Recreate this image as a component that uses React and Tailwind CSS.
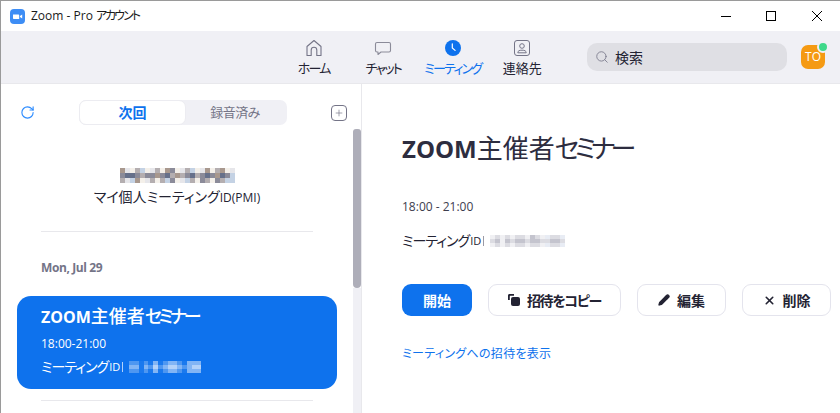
import { Pencil, X, Search, RotateCw, Plus } from 'lucide-react';

const font = "font-['Open_Sans','Noto_Sans_CJK_JP',sans-serif] [font-feature-settings:'palt']";

// pixelated meeting number blocks
const Mosaic = ({rows, cell = 'w-[5px] h-[5px]'}) => (
    <div className="flex flex-col">
        {rows.map((row, i) =>
            <div key={i} className="flex">
                {row.map((c, j) => <div key={j} className={cell + ' ' + c} />)}
            </div>
        )}
    </div>
)

const g1 = 'bg-[#e6e6ea]', g2 = 'bg-[#b4aeb0]', g3 = 'bg-[#8b8b99]', g4 = 'bg-[#66708a]', g5 = 'bg-[#f4f0ea]', g6 = 'bg-[#c4d2e4]', g7 = 'bg-[#a8988e]';
const pmiRows = [
    [g7, g1, g5, g2, g6, g5, g1, g2, g5, g7, g3, g5, g1, g2, g6, g5, g1, g7, g5, g2, g7, g5, g1],
    [g3, g4, g4, g3, g2, g3, g3, g7, g3, g4, g2, g7, g2, g3, g4, g2, g3, g4, g3, g7, g4, g3, g6],
    [g2, g1, g6, g7, g5, g1, g2, g5, g2, g6, g3, g5, g1, g6, g2, g5, g3, g2, g5, g3, g2, g6, g6],
];

const b1 = 'bg-[#1a79ee]', b2 = 'bg-[#4e97f1]', b3 = 'bg-[#82b5f5]', b4 = 'bg-[#b3d2f9]';
const cardRows = [
    [b2, b2, b1, b2, b1, b3, b1, b2, b3, b3, b2, b1, b3, b3, b3],
    [b3, b3, b1, b3, b2, b4, b2, b3, b4, b4, b3, b2, b3, b4, b4],
    [b2, b2, b1, b2, b1, b3, b1, b2, b3, b3, b2, b1, b3, b3, b3],
];

const l1 = 'bg-[#f0f0f3]', l2 = 'bg-[#dcdce2]', l3 = 'bg-[#c4c4ce]', l4 = 'bg-[#e8ecf4]';
const detailRows = [
    [l1, l2, l1, l2, l1, l2, l2, l1, l3, l2, l1, l4, l2, l2, l4],
    [l2, l3, l1, l3, l2, l3, l3, l2, l3, l3, l2, l2, l3, l3, l2],
    [l1, l2, l1, l2, l1, l2, l2, l1, l2, l2, l1, l4, l2, l2, l4],
];

const NavItem = ({icon, label, active, kana}) => (
    <div className="w-[69.5px] flex flex-col items-center">
        <div className="h-[22px] flex items-center justify-center">{icon}</div>
        <span className={`text-[13px] leading-[18px] whitespace-nowrap ${kana ? 'tracking-[-1.8px]' : ''} ${active ? 'text-[#0e72ed]' : 'text-[#232333]'}`}>{label}</span>
    </div>
)

const ActionButton = ({icon, label, width, tight}) => (
    <button className={`${width} h-8 flex items-center justify-center gap-[7px] bg-white border border-[#e4e4ed] rounded-[9px] text-[14px] font-bold text-[#232333]`}>
        {icon}
        <span className={tight ? 'tracking-[-1.300px]' : ''}>{label}</span>
    </button>
)

export default function App() {
    return (
        <div className={`w-[840px] h-[413px] overflow-hidden flex flex-col bg-white border-t border-l border-[#9a9a9a] text-[#232333] ${font}`}>
            {/* title bar */}
            <div className="h-[30px] shrink-0 flex items-center bg-white">
                <svg className="ml-[9px]" width="15" height="15" viewBox="0 0 15 15">
                    <rect width="15" height="15" rx="4" fill="#3d8df5" />
                    <path d="M3 5.500h5.200c.6 0 1 .4 1 1V10H4c-.6 0-1-.4-1-1z M10 7l2.200-1.600v4.200L10 8z" fill="#fff" />
                </svg>
                <span className="ml-[6px] text-[12px] text-[#1a1a1a]">Zoom - Pro <span className="tracking-[-2px]">アカウント</span></span>
                <div className="ml-auto flex items-center">
                    <svg className="mr-[35px]" width="10" height="10" viewBox="0 0 10 10" shapeRendering="crispEdges">
                        <path d="M0 5.500h10" stroke="#000" strokeWidth="1" />
                    </svg>
                    <svg className="mr-[36px]" width="10" height="10" viewBox="0 0 10 10" shapeRendering="crispEdges" fill="none">
                        <rect x=".5" y=".5" width="9" height="9" stroke="#000" strokeWidth="1" />
                    </svg>
                    <svg className="mr-[18px]" width="10" height="10" viewBox="0 0 10 10">
                        <path d="M0 0l10 10M10 0L0 10" stroke="#000" strokeWidth="1" />
                    </svg>
                </div>
            </div>
            {/* toolbar */}
            <div className="h-[53px] shrink-0 flex items-center bg-[#f0f0f5] border-b border-[#e8e8ec]">
                <div className="ml-[278px] flex">
                    <NavItem kana label="ホーム" icon={
                        <svg width="18" height="18" viewBox="0 0 18 18" fill="none" stroke="#747487" strokeWidth="1.1">
                            <path d="M2 16.500V7.500L9 1.500l7 6v9h-4.200V11c0-1.500-1.200-2.800-2.800-2.800S6.200 9.500 6.200 11v5.500z" strokeLinejoin="round" />
                        </svg>
                    } />
                    <NavItem kana label="チャット" icon={
                        <svg width="18" height="17" viewBox="0 0 18 17" fill="none" stroke="#8b8b99" strokeWidth="1.1">
                            <path d="M3 2.500h12c1 0 1.500.5 1.500 1.500v6.500c0 1-.5 1.500-1.500 1.500H7l-3 2.500V12H3c-1 0-1.500-.5-1.500-1.500V4c0-1 .5-1.500 1.500-1.500z" strokeLinejoin="round" />
                        </svg>
                    } />
                    <NavItem kana active label="ミーティング" icon={
                        <svg width="16" height="16" viewBox="0 0 16 16">
                            <circle cx="8" cy="8" r="8" fill="#0e72ed" />
                            <path d="M7.300 3.800v4.200l2.800 2.400" fill="none" stroke="#fff" strokeWidth="1.200" strokeLinecap="round" />
                        </svg>
                    } />
                    <NavItem label="連絡先" icon={
                        <svg width="16" height="16" viewBox="0 0 16 16" fill="none" stroke="#747487" strokeWidth="1">
                            <rect x=".5" y=".5" width="15" height="15" rx="2.500" />
                            <circle cx="8" cy="6" r="2.300" />
                            <path d="M3.800 12.800c0-2 1.500-2.600 4.200-2.600s4.200.6 4.200 2.600z" />
                        </svg>
                    } />
                </div>
                <div className="ml-[30px] w-[200px] h-7 flex items-center bg-[#dfdfe4] rounded-[10px]">
                    <Search size={14} strokeWidth={1.4} className="ml-2 text-[#747487]" />
                    <span className="ml-[6px] text-[14px] text-[#232333]">検索</span>
                </div>
                <div className="ml-[14px] relative w-6 h-6 flex items-center justify-center bg-[#f59a13] rounded-[7px] text-[12px] text-white">
                    TO
                    <div className="absolute -top-1 -right-1 w-2 h-2 box-content rounded-full bg-[#3fd98a] border-2 border-[#f0f0f5]" />
                </div>
            </div>
            {/* content */}
            <div className="flex-1 flex min-h-0">
                {/* sidebar */}
                <div className="w-[361px] shrink-0 flex border-r border-[#e8e8ec]">
                    <div className="w-[352px] flex flex-col">
                        <div className="h-[57px] shrink-0 flex items-center">
                            <RotateCw size={15} strokeWidth={1.8} className="ml-[19px] text-[#2d8cff]" />
                            <div className="ml-[44px] w-[208px] h-[25px] flex items-center bg-[#f0f0f5] rounded-[7px]">
                                <div className="w-[107px] h-[25px] flex items-center justify-center bg-white border border-[#ececf1] rounded-[7px] text-[14px] font-bold text-[#0e72ed]">次回</div>
                                <div className="flex-1 text-center text-[13px] tracking-[-0.5px] text-[#747487] pr-[3px]">録音済み</div>
                            </div>
                            <div className="ml-[44px] w-4 h-4 flex items-center justify-center border border-[#747487] rounded-[4px]">
                                <Plus size={10} strokeWidth={1.6} className="text-[#747487]" />
                            </div>
                        </div>
                        <div className="flex flex-col items-center mt-[27px]">
                            <Mosaic rows={pmiRows} />
                            <span className="mt-[4px] text-[14px] leading-[20px] text-[#232333] whitespace-nowrap">マイ個人ミーティング<span className="text-[12px]">ID(PMI)</span></span>
                        </div>
                        <div className="mx-10 mt-[23px] h-px bg-[#e8e8ec]" />
                        <div className="ml-10 mt-[28px] text-[12px] leading-4 font-bold text-[#747487] tracking-[-0.4px]">Mon, Jul 29</div>
                        <div className="ml-4 mt-[20px] w-[320px] h-[93px] shrink-0 flex flex-col bg-[#0e72ed] rounded-[14px] pl-6 pt-2 text-white">
                            <div className="text-[18px] leading-6 whitespace-nowrap"><span className="text-[16px] font-bold">ZOOM</span><span className="font-medium">主催者<span className="tracking-[-3.400px]">セミナー</span></span></div>
                            <div className="mt-[7px] text-[12px] leading-4">18:00-21:00</div>
                            <div className="mt-[5px] flex items-center text-[14px] leading-5 whitespace-nowrap">
                                <span className="tracking-[-1px]">ミーティング</span><span className="ml-[1px] text-[11px]">ID</span><span className="ml-[2px] mr-[6px] w-px h-2.5 bg-[#b3d2f9]" />
                                <Mosaic rows={cardRows} cell="w-[4.8px] h-1" />
                            </div>
                        </div>
                        <div className="mx-10 mt-[11px] h-px shrink-0 bg-[#e8e8ec]" />
                    </div>
                    {/* scrollbar */}
                    <div className="w-2 flex flex-col">
                        <div className="mt-[45px] h-[159px] shrink-0 bg-[#aeaeb9] rounded-t-[3px] rounded-b-[4px]" />
                        <div className="flex-1 bg-[#f0f0f5]" />
                    </div>
                </div>
                {/* meeting detail */}
                <div className="flex-1 flex flex-col pl-10">
                    <div className="mt-[48px] text-[26px] leading-[32px] text-[#2d2d3f] whitespace-nowrap"><span className="text-[24px] font-bold">ZOOM</span><span>主催者<span className="tracking-[-5px]">セミナー</span></span></div>
                    <div className="mt-[34px] text-[12px] leading-4 text-[#3d3d4e]">18:00 - 21:00</div>
                    <div className="mt-[16px] flex items-center text-[14px] leading-5 whitespace-nowrap text-[#232333]">
                        <span className="tracking-[-1px]">ミーティング</span><span className="ml-[1px] text-[11px]">ID</span><span className="ml-[2px] mr-[6px] w-px h-2.5 bg-[#9a9aa6]" />
                        <Mosaic rows={detailRows} cell="w-[5px] h-1" />
                    </div>
                    <div className="mt-[33px] flex gap-4">
                        <button className="w-[70px] h-8 bg-[#0e72ed] rounded-[9px] text-[14px] font-bold text-white">開始</button>
                        <ActionButton tight width="w-[133px]" label="招待をコピー" icon={
                            <svg width="12" height="12" viewBox="0 0 12 12" fill="#232333">
                                <path d="M1.500 0H6v1.800H2.200a.4.4 0 0 0-.4.4V6H0V1.500C0 .6.600 0 1.500 0z" />
                                <rect x="3" y="3" width="9" height="9" rx="2" />
                            </svg>
                        } />
                        <ActionButton width="w-[89px]" label="編集" icon={<Pencil size={12} strokeWidth={2.6} fill="#232333" className="text-[#232333]" />} />
                        <ActionButton width="w-[89px]" label="削除" icon={<X size={13} strokeWidth={3} className="text-[#232333]" />} />
                    </div>
                    <div className="mt-[30px] text-[12px] leading-4 tracking-[0.3px] text-[#0e72ed]">ミーティングへの招待を表示</div>
                </div>
            </div>
        </div>
    )
}
